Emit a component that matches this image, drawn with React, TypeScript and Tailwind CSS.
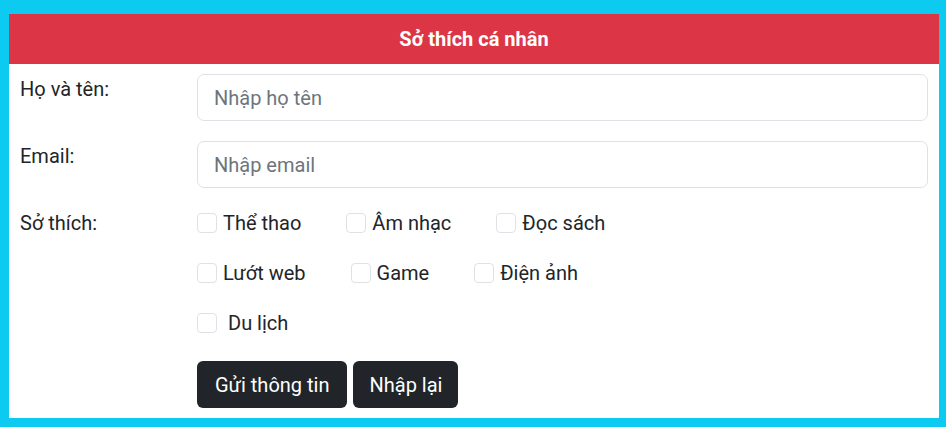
import React from "react";

const font = { fontFamily: "Roboto, 'Noto Sans', sans-serif" };

function Check({ label, extra = "" }: { label: string; extra?: string }) {
  return (
    <label className="flex items-center h-[30px] mr-[45px] text-[20px] text-[#212529]">
      <span className="w-[20px] h-[20px] border border-[#dee2e6] rounded-[4px] bg-white shrink-0" />
      <span className={"ml-[6px] " + extra}>{label}</span>
    </label>
  );
}

export default function App() {
  return (
    <div className="bg-[#0dcaf0] min-h-[427px] pt-[14px] pl-[9px] pr-[7px] pb-[9px]" style={font}>
      <div className="bg-white">
        <div className="bg-[#dc3545] h-[50px] flex items-center justify-center text-white font-bold text-[20px]">
          Sở thích cá nhân
        </div>
        <div className="px-[11px] pt-[10px] pb-[10px] text-[#212529] text-[20px] leading-[30px]">
          <div className="flex items-start mb-[20px]">
            <div className="w-[177px] shrink-0">Họ và tên:</div>
            <input
              className="flex-1 h-[47px] border border-[#dee2e6] rounded-[7px] px-[16px] text-[20px] placeholder:text-[#6c757d] outline-none"
              placeholder="Nhập họ tên"
            />
          </div>
          <div className="flex items-start mb-[20px]">
            <div className="w-[177px] shrink-0">Email:</div>
            <input
              className="flex-1 h-[47px] border border-[#dee2e6] rounded-[7px] px-[16px] text-[20px] placeholder:text-[#6c757d] outline-none"
              placeholder="Nhập email"
            />
          </div>
          <div className="flex items-start">
            <div className="w-[177px] shrink-0">Sở thích:</div>
            <div className="flex flex-col gap-[20px]">
              <div className="flex">
                <Check label="Thể thao" />
                <Check label="Âm nhạc" />
                <Check label="Đọc sách" />
              </div>
              <div className="flex">
                <Check label="Lướt web" />
                <Check label="Game" />
                <Check label="Điện ảnh" />
              </div>
              <div className="flex">
                <Check label="Du lịch" extra="ml-[11px]" />
              </div>
            </div>
          </div>
          <div className="flex mt-[23px] pl-[177px] gap-[6px]">
            <button className="h-[47px] px-[18px] bg-[#212529] text-white rounded-[6px] text-[20px]">
              Gửi thông tin
            </button>
            <button className="h-[47px] px-[16px] bg-[#212529] text-white rounded-[6px] text-[20px]">
              Nhập lại
            </button>
          </div>
        </div>
      </div>
    </div>
  );
}
